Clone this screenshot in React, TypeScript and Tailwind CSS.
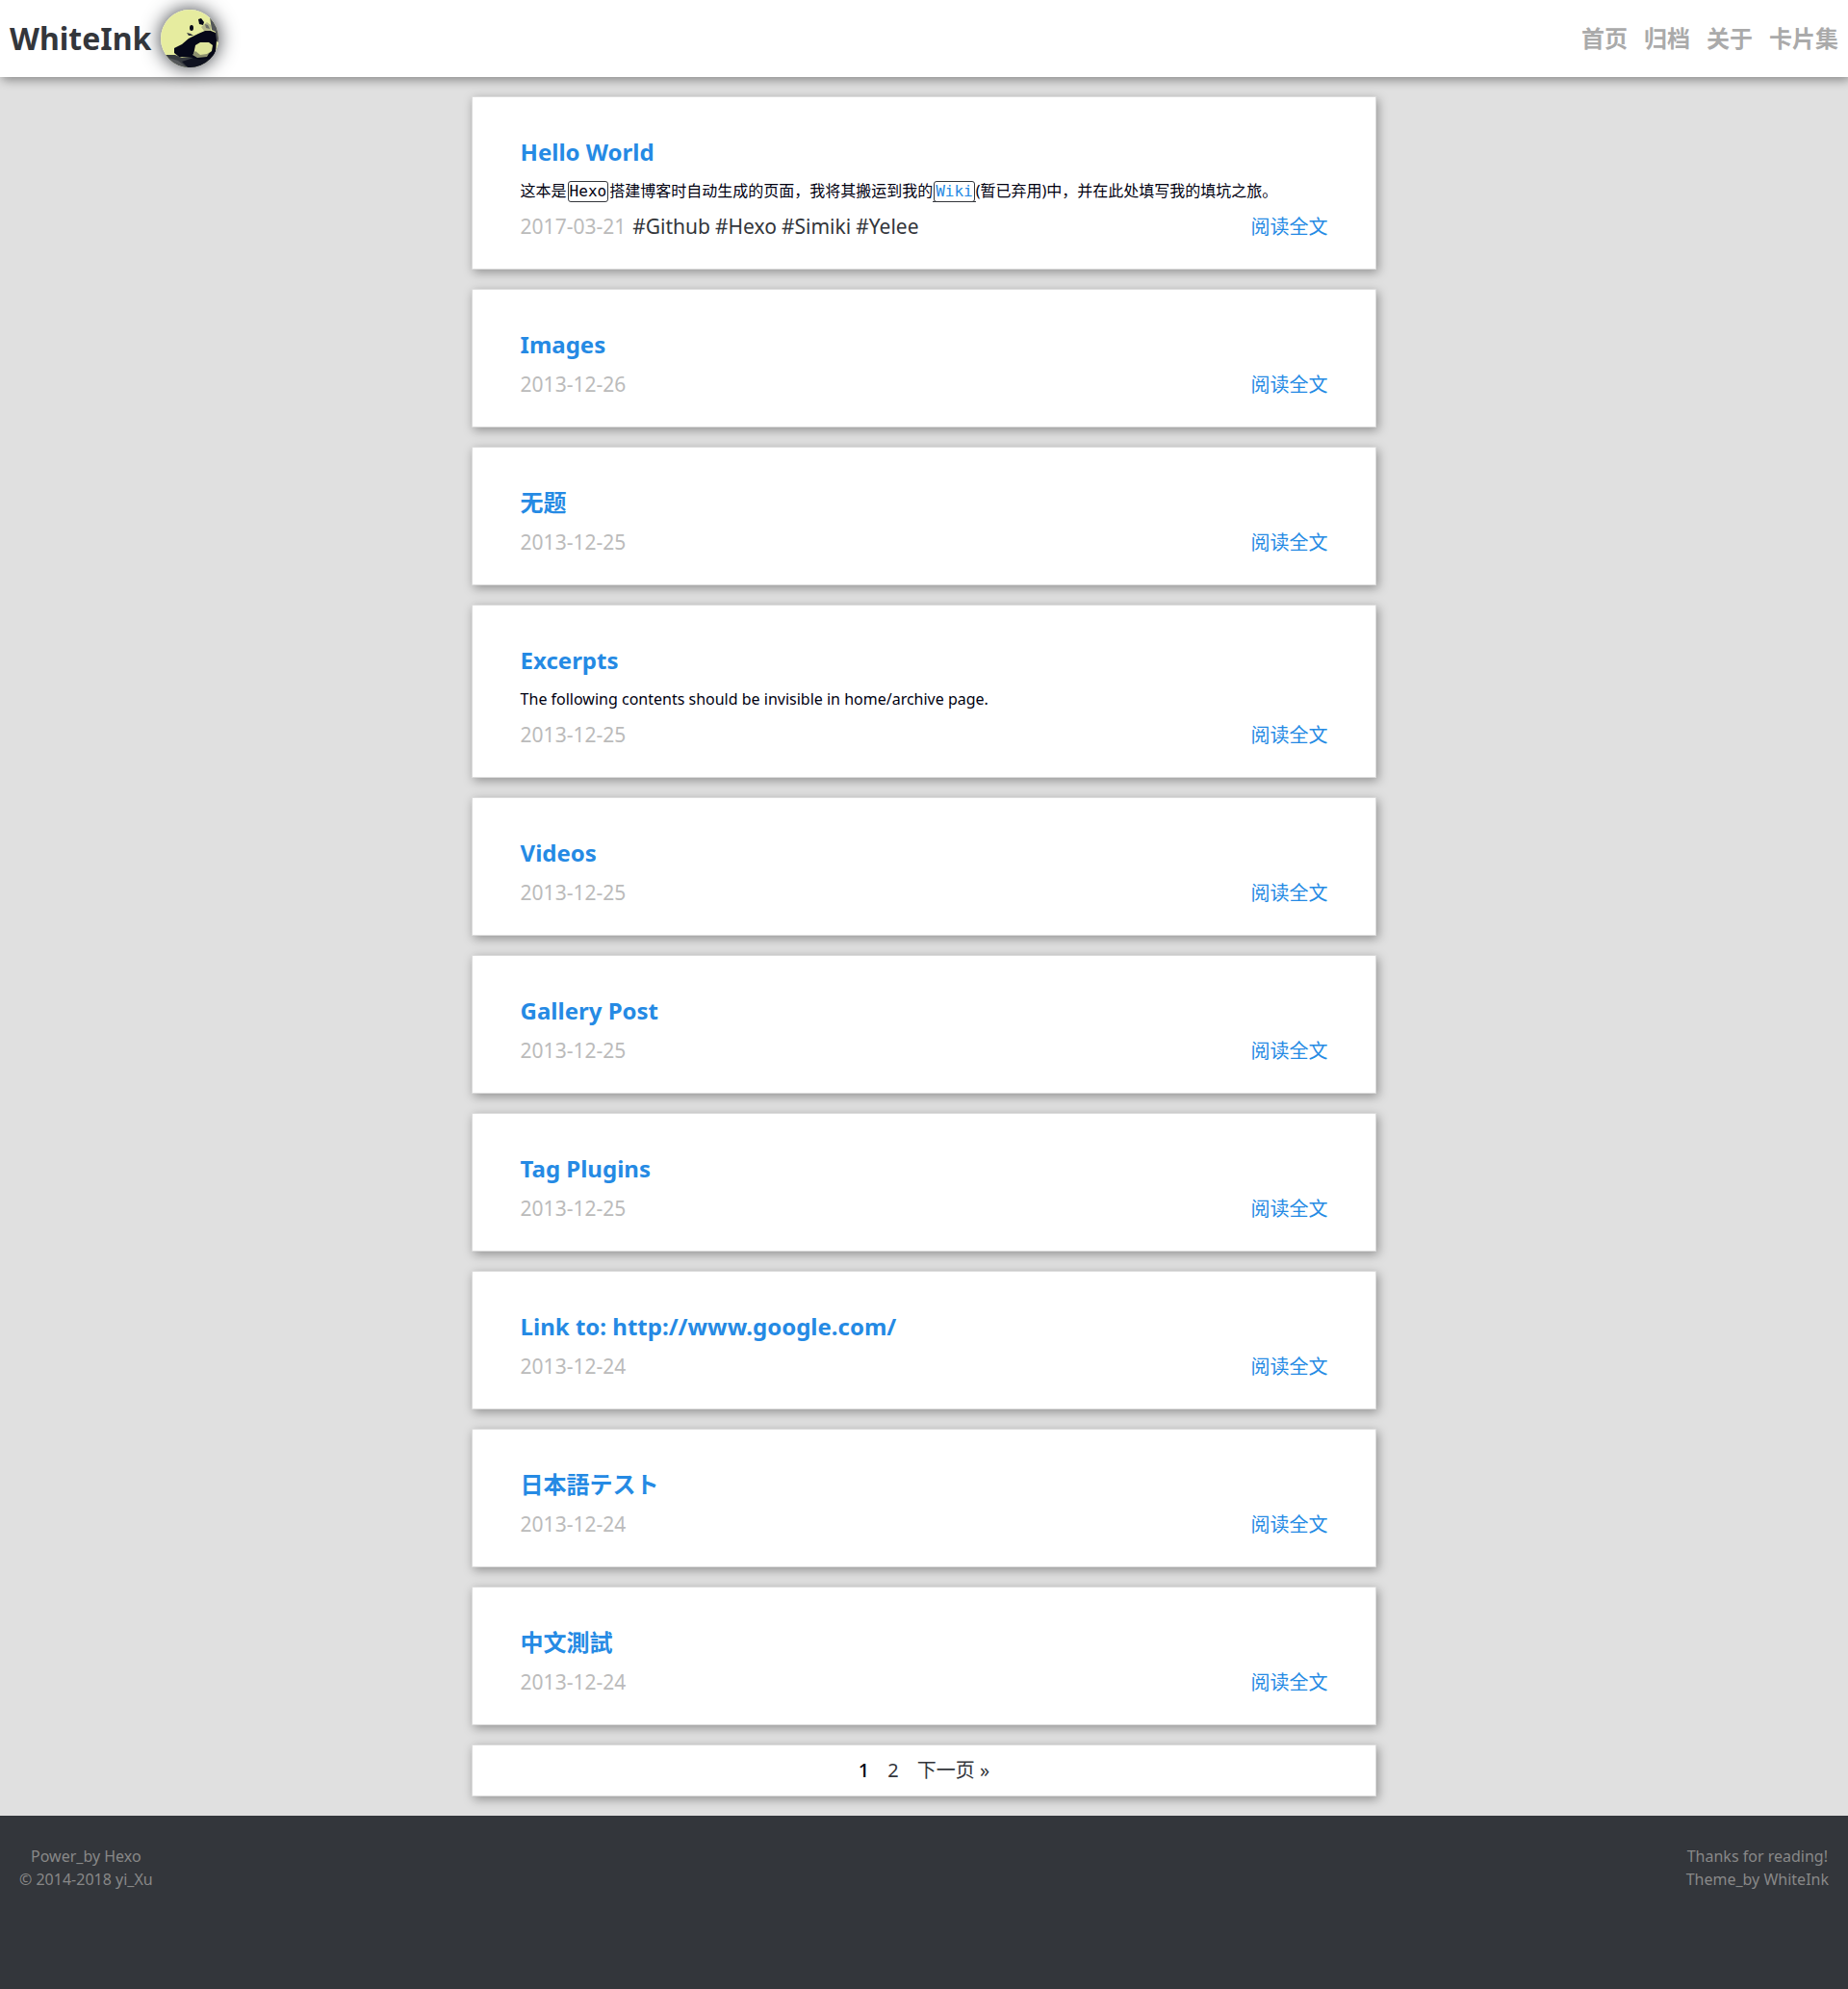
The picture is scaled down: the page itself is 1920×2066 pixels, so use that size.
import React from 'react';

interface Post {
  title: string;
  date: string;
  lang?: string;
  excerpt?: React.ReactNode;
  tags?: string[];
}

const posts: Post[] = [
  {
    title: 'Hello World',
    date: '2017-03-21',
    tags: ['Github', 'Hexo', 'Simiki', 'Yelee'],
    excerpt: (
      <>
        这本是<Code>Hexo</Code>搭建博客时自动生成的页面，我将其搬运到我的
        <a href="#wiki" className="border-b border-[#33363b] text-[#258ae4]">
          <Code>Wiki</Code>
        </a>
        (暂已弃用)中，并在此处填写我的填坑之旅。
      </>
    ),
  },
  { title: 'Images', date: '2013-12-26' },
  { title: '无题', date: '2013-12-25' },
  {
    title: 'Excerpts',
    date: '2013-12-25',
    excerpt: 'The following contents should be invisible in home/archive page.',
  },
  { title: 'Videos', date: '2013-12-25' },
  { title: 'Gallery Post', date: '2013-12-25' },
  { title: 'Tag Plugins', date: '2013-12-25' },
  { title: 'Link to: http://www.google.com/', date: '2013-12-24' },
  { title: '日本語テスト', date: '2013-12-24', lang: 'ja' },
  { title: '中文測試', date: '2013-12-24', lang: 'zh-TW' },
];

const navItems = ['首页', '归档', '关于', '卡片集'];

function Code({ children }: { children: React.ReactNode }) {
  return (
    <code className="mx-px rounded-[3px] border border-[#33363b] px-px pb-px font-['DejaVu_Sans_Mono',monospace] text-base">
      {children}
    </code>
  );
}

function Avatar() {
  return (
    <svg
      viewBox="0 0 60 60"
      className="size-[60px] rounded-full shadow-[0_0_20px_#33363b]"
      role="img"
      aria-label="WhiteInk"
    >
      <rect width="60" height="60" fill="#e6ec9f" />
      {/* Rock */}
      <path d="M51 8 L60 18 L60 34 L56 32 L57 23 L53 21 Z" fill="#54575a" />
      <path d="M0 47 L15 47 L22 50 L40 49 L60 44 L60 60 L0 60 Z" fill="#383c40" />
      <path d="M8 50 L18 53 L27 60 L14 58 Z" fill="#55585a" />
      <path d="M22 54 L34 50 L60 42 L60 60 L28 60 Z" fill="#101320" />
      {/* Body */}
      <path
        d="M14 40 L22 36 L29 30 L35 27 L39 25 L46 22 L52 22 L57 24 L58 32 L57 46 L50 51 L40 52 L33 50 L19 49 L14 45 Z"
        fill="#060818"
      />
      <path d="M36 37 L41 34 L50 34 L54 37 L53 43 L48 47 L39 48 L34 47 Z" fill="#dfe59b" />
      <path d="M33 47 L36 43 L41 47 L48 46 L51 44 L48 49 L38 50 Z" fill="#8d906f" />
      {/* Head */}
      <path d="M30 24 L34 19 L40 16 L47 14 L51 17 L50 22 L43 22 L36 26 Z" fill="#e6ec9f" />
      <path d="M42 18 L48 13 L52 16 L52 22 L45 22 Z" fill="#b5b78b" />
      <path d="M46 15 L49 16 L51 20 L47 19 Z" fill="#6e706a" />
      <ellipse cx="32" cy="19" rx="2" ry="3" fill="#060818" />
      <path d="M39 10 L42 9 L45 13 L44 16 L40 15 Z" fill="#060818" />
      <path d="M27 24 L31 25 L34 27 L29 27 Z" fill="#33363b" />
    </svg>
  );
}

function PostCard({ post }: { post: Post }) {
  return (
    <article className="border border-[#dcdcdc] bg-white px-[50px] pt-[35px] pb-[25px] shadow-[2px_3px_10px_rgba(0,0,0,0.35)]">
      <h2 lang={post.lang} className="text-2xl leading-[44px] font-bold">
        <a href="#post" className="text-[#258ae4]">
          {post.title}
        </a>
      </h2>
      {post.excerpt && <p className="leading-9 text-[#000010]">{post.excerpt}</p>}
      <div className="mt-[2px] flex h-9 items-center justify-between">
        <div className="flex gap-[5px] text-[21px]">
          <time className="mr-[2px] text-[#bbbbbb]">{post.date}</time>
          {post.tags?.map((tag) => (
            <a key={tag} href="#tag" className="text-[#33363b]">
              #{tag}
            </a>
          ))}
        </div>
        <a href="#post" className="text-xl text-[#258ae4]">
          阅读全文
        </a>
      </div>
    </article>
  );
}

export default function App() {
  return (
    <div className="flex min-h-screen flex-col bg-[#e0e0e0] font-['Noto_Sans','Noto_Sans_CJK_SC',sans-serif]">
      <header className="relative flex h-20 items-center justify-between bg-white px-[10px] shadow-[2px_3px_10px_rgba(0,0,0,0.4)]">
        <a href="#home" className="flex items-center gap-[10px] text-[32px] font-bold text-[#33363b]">
          WhiteInk
          <Avatar />
        </a>
        <nav className="flex gap-[17px] text-2xl font-bold">
          {navItems.map((item) => (
            <a key={item} href="#nav" className="text-[#aaaaaa]">
              {item}
            </a>
          ))}
        </nav>
      </header>

      <main className="mx-auto flex w-[49%] flex-col gap-5 py-5">
        {posts.map((post) => (
          <PostCard key={post.title} post={post} />
        ))}

        {/* Pagination */}
        <nav className="flex h-[54px] items-center justify-center gap-[19px] border border-[#dcdcdc] bg-white text-xl text-[#33363b] shadow-[2px_3px_10px_rgba(0,0,0,0.35)]">
          <span className="font-medium text-[#000010]">1</span>
          <a href="#page-2">2</a>
          <a href="#page-2">下一页 »</a>
        </nav>
      </main>

      <footer className="flex min-h-[180px] flex-1 justify-between bg-[#33363b] px-5 pt-[30px] text-center text-base leading-6 text-[#888888]">
        <div>
          <p>Power_by Hexo</p>
          <p>© 2014-2018 yi_Xu</p>
        </div>
        <div>
          <p>Thanks for reading!</p>
          <p>Theme_by WhiteInk</p>
        </div>
      </footer>
    </div>
  );
}
